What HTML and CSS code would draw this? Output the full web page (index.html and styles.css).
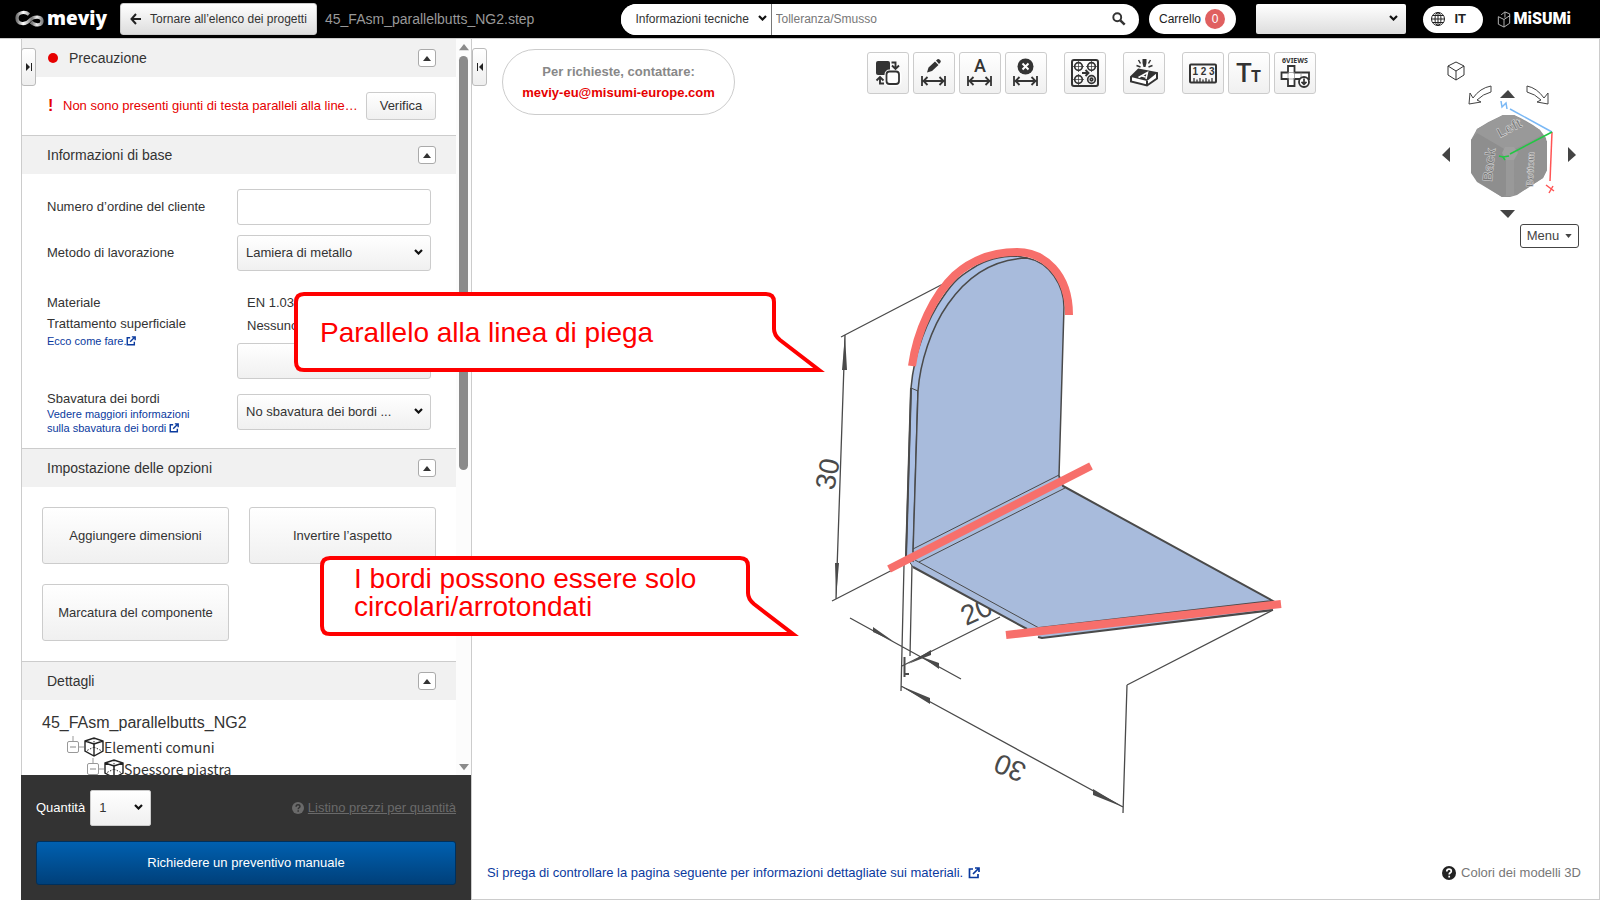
FILE: index.html
```html
<!DOCTYPE html>
<html lang="it">
<head>
<meta charset="utf-8">
<title>meviy</title>
<link rel="stylesheet" href="styles.css">
</head>
<body>
<svg class="defs" aria-hidden="true">
  <symbol id="ext" viewBox="0 0 12 12"><path d="M5 2H1.500v8.500H10V7M7 1h4v4M11 1L5 7" fill="none" stroke="currentColor" stroke-width="1.700"/></symbol>
  <symbol id="up" viewBox="0 0 8 5"><path d="M0 5L4 0l4 5z" fill="currentColor"/></symbol>
  <symbol id="chev" viewBox="0 0 9 6"><path d="M1 1l3.500 3.500L8 1" fill="none" stroke="#111" stroke-width="2.200"/></symbol>
  <symbol id="help" viewBox="0 0 14 14"><circle cx="7" cy="7" r="7" fill="currentColor"/><path d="M4.800 5.400c0-3 4.500-2.800 4.500-.2 0 1.600-2.100 1.500-2.100 3.200M7.200 9.700v1.700" fill="none" stroke="var(--mark)" stroke-width="1.700"/></symbol>
  <symbol id="box" viewBox="0 0 20 20"><path d="M1 4l9-3 9 3v10l-9 5-9-5zM1 4l9 3 9-3M10 7v12" fill="none" stroke="#222" stroke-width="1.400"/><path d="M10 1v9M10 10l-8 4M10 10l8 4" fill="none" stroke="#222" stroke-dasharray="1.500 1.500"/></symbol>
  <symbol id="dim" viewBox="0 0 42 42"><path d="M9 24v10M32 24v10M10.500 29h20M14.500 25l-4 4 4 4M26.500 25l4 4-4 4" fill="none" stroke="#333" stroke-width="1.800"/></symbol>
</svg>

<header class="topbar">
  <a class="brand" href="#" aria-label="meviy">
    <svg class="brand-mark" viewBox="0 0 29 16"><defs><linearGradient id="mg"><stop offset="0" stop-color="#777"/><stop offset=".25" stop-color="#fff"/><stop offset=".6" stop-color="#777"/><stop offset=".8" stop-color="#eee"/><stop offset="1" stop-color="#888"/></linearGradient></defs><path d="M14 3.500C10 0 2 1 2 7c0 7 9 7 13 2 4-4 12-4 12 1 0 5-7 5-11 1" fill="none" stroke="url(#mg)" stroke-width="3.200"/></svg>
    <span>meviy</span>
  </a>
  <button class="btn back"><svg class="i12" viewBox="0 0 12 12"><path d="M6 1L1.500 6 6 11M1.500 6H11" fill="none" stroke="#222" stroke-width="2"/></svg>Tornare all’elenco dei progetti</button>
  <span class="filename">45_FAsm_parallelbutts_NG2.step</span>
  <form class="search">
    <span class="pick"><select aria-label="Categoria"><option>Informazioni tecniche</option></select><svg><use href="#chev"/></svg></span>
    <input type="text" aria-label="Cerca" placeholder="Tolleranza/Smusso">
    <button type="button" class="find" aria-label="Cerca"><svg viewBox="0 0 16 16"><circle cx="6" cy="6" r="4.500" fill="none" stroke="#333" stroke-width="2.200"/><path d="M9.500 9.500l5 5" stroke="#333" stroke-width="2.800"/></svg></button>
  </form>
  <button class="cart">Carrello <span class="count">0</span></button>
  <span class="pick account"><select aria-label="Account"><option></option></select><svg><use href="#chev"/></svg></span>
  <button class="lang"><svg viewBox="0 0 14 14"><g fill="none" stroke="#222"><circle cx="7" cy="7" r="6.500"/><ellipse cx="7" cy="7" rx="3" ry="6.500"/><path d="M7 .5v13M.5 7h13M1.500 3.500h11M1.500 10.500h11"/></g></svg>IT</button>
  <a class="misumi" href="#"><svg viewBox="0 0 14 18"><path d="M1 6l6 3v8l-6-3zM7 9l6-4v8l-6 4M4 4l4-3v6M8 1l5 2v3" fill="none" stroke="#bbb"/></svg>MiSUMi</a>
</header>

<div class="work">
  <aside class="side">
    <button class="edge edge-left" aria-label="Chiudi pannello"><svg viewBox="0 0 8 10"><path d="M1 1l4 4-4 4z" fill="#222"/><path d="M6.500 1v8" stroke="#222"/></svg></button>
    <div class="panel">
      <div class="scroll">
        <section>
          <h2><i class="dot"></i>Precauzione<button class="fold" aria-label="Comprimi"><svg><use href="#up"/></svg></button></h2>
          <div class="alert"><b>!</b><span class="msg">Non sono presenti giunti di testa paralleli alla line…</span><button class="btn">Verifica</button></div>
        </section>
        <section>
          <h2>Informazioni di base<button class="fold" aria-label="Comprimi"><svg><use href="#up"/></svg></button></h2>
          <div class="fields">
            <label for="ord">Numero d’ordine del cliente</label><input id="ord" type="text">
            <label for="met">Metodo di lavorazione</label><span class="pick"><select id="met"><option>Lamiera di metallo</option></select><svg><use href="#chev"/></svg></span>
            <div class="mat-l"><span>Materiale</span><span>Trattamento superficiale</span><a href="#">Ecco come fare.<svg><use href="#ext"/></svg></a></div>
            <div class="mat-v"><span>EN 1.0330</span><span>Nessuno</span><button class="btn" aria-label="Modifica"></button></div>
            <div class="edge-l"><label for="sb">Sbavatura dei bordi</label><a href="#">Vedere maggiori informazioni<br>sulla sbavatura dei bordi <svg><use href="#ext"/></svg></a></div>
            <span class="pick"><select id="sb"><option>No sbavatura dei bordi ...</option></select><svg><use href="#chev"/></svg></span>
          </div>
        </section>
        <section>
          <h2>Impostazione delle opzioni<button class="fold" aria-label="Comprimi"><svg><use href="#up"/></svg></button></h2>
          <div class="options"><button class="btn">Aggiungere dimensioni</button><button class="btn">Invertire l’aspetto</button><button class="btn">Marcatura del componente</button></div>
        </section>
        <section>
          <h2>Dettagli<button class="fold" aria-label="Comprimi"><svg><use href="#up"/></svg></button></h2>
          <div class="tree">
            <div class="root">45_FAsm_parallelbutts_NG2</div>
            <div class="node"><svg class="knot" viewBox="0 0 17 22"><path d="M6 0v5M12 11h5" stroke="#999"/><rect x=".5" y="5.500" width="11" height="11" rx="1.500" fill="#fff" stroke="#999"/><path d="M3 11h6" stroke="#888"/></svg><svg class="cube"><use href="#box"/></svg>Elementi comuni</div>
            <div class="node sub"><svg class="knot" viewBox="0 0 17 22"><path d="M6 0v5M12 11h5" stroke="#999"/><rect x=".5" y="5.500" width="11" height="11" rx="1.500" fill="#fff" stroke="#999"/><path d="M3 11h6" stroke="#888"/></svg><svg class="cube"><use href="#box"/></svg>Spessore piastra</div>
          </div>
        </section>
      </div>
      <div class="bar"><svg><use href="#up"/></svg><div class="track"><div class="thumb"></div></div><svg class="down"><use href="#up"/></svg></div>
    </div>
    <div class="order">
      <div class="qty"><label for="q">Quantità</label><span class="pick"><select id="q"><option>1</option></select><svg><use href="#chev"/></svg></span><a href="#"><svg><use href="#help"/></svg><u>Listino prezzi per quantità</u></a></div>
      <button class="quote">Richiedere un preventivo manuale</button>
    </div>
  </aside>

  <main class="viewer">
    <button class="edge edge-right" aria-label="Apri pannello"><svg viewBox="0 0 8 10"><path d="M7 1L3 5l4 4z" fill="#222"/><path d="M1.500 1v8" stroke="#222"/></svg></button>
    <div class="contact"><span>Per richieste, contattare:</span><a href="#">meviy-eu@misumi-europe.com</a></div>
    <div class="tools">
      <div>
        <button class="tool" aria-label="Scambia"><svg viewBox="0 0 42 42"><rect x="9" y="9" width="14" height="14" rx="2" fill="#333"/><rect x="19.500" y="19.500" width="13" height="13" rx="3" fill="#fff" stroke="#fff" stroke-width="4"/><rect x="19.500" y="19.500" width="12.500" height="12.500" rx="3" fill="#fff" stroke="#333" stroke-width="1.800"/><path d="M24.500 10.500h4V17M25 13.500l3.500 3.500 3.500-3.500M17 31.500h-4V25M9.500 28.500L13 25l3.500 3.500" fill="none" stroke="#333" stroke-width="1.900"/></svg></button>
        <button class="tool" aria-label="Modifica quota"><svg viewBox="0 0 42 42"><use href="#dim"/><path d="M14 20.500l1.500-5 6.500-6 3.500 3.500-6.500 6zM23 8.500l1.500-1.300q1-.5 2 .4l1 1q.7 1-.1 1.900L26 12z" fill="#333"/></svg></button>
        <button class="tool" aria-label="Quota testo"><svg viewBox="0 0 42 42"><use href="#dim"/><text x="21" y="20" class="t-a">A</text></svg></button>
        <button class="tool" aria-label="Elimina quota"><svg viewBox="0 0 42 42"><use href="#dim"/><circle cx="20.500" cy="14.500" r="8" fill="#333"/><path d="M17.500 11.500l6 6m0-6l-6 6" stroke="#fff" stroke-width="2"/></svg></button>
      </div>
      <div>
        <button class="tool" aria-label="Fori"><svg viewBox="0 0 42 42" fill="none" stroke="#333"><rect x="8" y="8" width="26" height="26" rx="2" stroke-width="2"/><g stroke-width="1.700"><circle cx="14.500" cy="14.500" r="3.800"/><circle cx="27.500" cy="14.500" r="3.800"/><circle cx="14.500" cy="27.500" r="3.800"/><circle cx="27.500" cy="27.500" r="3.800"/><circle cx="27.500" cy="27.500" r="1.300"/></g><path d="M9 14.500h11M14.500 9v11M22 14.500h11M27.500 9v11M9 27.500h11M14.500 22v11" stroke-width=".7"/><path d="M18 21h6M21.500 18l3 3-3 3" stroke-width="1.900"/></svg></button>
      </div>
      <div>
        <button class="tool" aria-label="Marcatura"><svg viewBox="0 0 42 42"><path d="M8 25L15.500 17.500 34 21v5.500L24 33.500 8 29.500z" fill="#fff" stroke="#333" stroke-width="2"/><path d="M8 25L15.500 17.500 34 21 24 29z" fill="#333"/><path d="M24 29v4.500" stroke="#333" stroke-width="2"/><path d="M15.500 25.500l9-5-1.500 6.500M19 24l3.500 1" fill="none" stroke="#fff" stroke-width="1.500"/><path d="M19.500 7h4v4l-1 4h-2l-1-4z" fill="#333"/><path d="M15.500 8l2 3.500M13.500 13.500l4 1.500M27.500 8l-2 3.500M29.500 13.500l-4 1.500" stroke="#333" stroke-width="1.500"/></svg></button>
      </div>
      <div>
        <button class="tool" aria-label="Misura"><svg viewBox="0 0 42 42"><rect x="8" y="12.500" width="26" height="18" rx="1" fill="none" stroke="#333" stroke-width="2"/><text x="21.500" y="23" class="t-n">1 2 3</text><path d="M12 30v-4M15 30v-2.500M18 30v-4M21 30v-2.500M24 30v-4M27 30v-2.500M30 30v-4" stroke="#333" stroke-width="1.300"/></svg></button>
        <button class="tool" aria-label="Testo"><svg viewBox="0 0 42 42"><text x="16" y="30" class="t-t">T</text><text x="28" y="30" class="t-s">T</text></svg></button>
        <button class="tool" aria-label="6 viste"><svg viewBox="0 0 42 42"><text x="21" y="11" class="t-v">6VIEWS</text><path d="M7.500 20.500h6.500v-6.500h6.500v6.500H35v6.500H20.500v7H14v-7H7.500z" fill="#fff" stroke="#333" stroke-width="1.800"/><path d="M14 20.500h6.500v6.500H14zM27 20.500V27" fill="none" stroke="#888" stroke-width=".7"/><circle cx="30" cy="30" r="5" fill="#fff" stroke="#333" stroke-width="1.800"/><path d="M30 26.500v5.500M27.500 29.800L30 32.300l2.500-2.500" fill="none" stroke="#333" stroke-width="1.700"/></svg></button>
      </div>
    </div>

    <svg class="model" viewBox="800 230 500 600" role="img" aria-label="Modello 3D">
      <g class="dimension">
        <path d="M841 337L943 284M845 335L836 599M832 601L906 563M904 565L901 691M912 565L910 656M850 618L961 679M902 666L1000 617M901 686L1123 807M1127 685L1123 813M1127 685L1273 610"/>
        <path class="head" d="M845 335l-3 35h5zM836 598l-1-35h4zM893 641l-20-14v5zM922 657l17 6v6zM908 664l23-14v5zM901 686l29 12v6zM1123 807l-30-18v6z"/>
        <path d="M904.500 657V677M905 674h4" stroke-width="2"/>
        <text transform="translate(834 491) rotate(-79)">30</text>
        <text transform="translate(966 626) rotate(-24)">20</text>
        <text transform="translate(1028 765) rotate(203)">30</text>
      </g>
      <g class="plate">
        <path d="M1059 475L1063 486L1273 601L1273 610L1042 638L913 567L906 557L913 549z" stroke="none"/>
        <path class="side-face" d="M906 557L911 388C914 352 928 318 943 297C955 279 962 275 973 268C985 260 999 256 1017 256L1027 258L918 391L913 561z"/>
        <path d="M913 552L918 391C920 363 931 328 948 304C966 278 990 259 1027 258C1050 262 1064 286 1064 307L1059 476"/>
        <path d="M911 388l7 3M913 549L1059 475M919 562L1065 488M915 560L1039 628M913 567L906 557" fill="none" stroke-width="1"/>
        <path class="bold" d="M1059 476L1063 486L1273 601L1039 628M913 567L1027 629M1038 637L1042 638L1273 610M906 557L911 388"/>
      </g>
      <g class="mark"><path d="M912 366C917 330 934 295 955 275C973 259 994 252 1017 252C1030 252 1042 256 1053 268C1064 280 1069 297 1069 315"/><path d="M889 569L1091 466M1006 635L1281 604"/></g>
    </svg>

    <div class="orient">
      <svg viewBox="0 0 180 150">
        <path d="M28 16l8-4 8 4v9l-8 5-8-5zM28 16l8 5 8-5M36 21v9" fill="none" stroke="#333"/>
        <path d="M71 36q-11 2-18 12l-3-5-1 11 12-2-4-2q6-6 14-8zM107 36q10 2 17 12l4-5v11l-11-2 4-2q-6-6-14-8z" fill="#fff" stroke="#444"/>
        <path d="M83 65h11q14 6 26 15l6 8 1 8v24l-4 8-26 17-7 2H82l-25-15-6-9V90l6-11q12-8 26-14z" fill="#929292"/>
        <path d="M83 65h11l26 15 1 6-32 16h-3L54 87l3-8z" fill="#999"/>
        <path d="M51 90l6-7 29 17v44l-4 3-25-16-6-9z" fill="#8e8e8e"/>
        <path d="M93 103l27-17 7 5v29l-4 8-27 17z" fill="#929292"/>
        <path d="M85 97h9l4 6-4 7h-8l-4-7z" fill="#a0a0a0"/><path d="M86 110h8v36h-8z" fill="#999"/>
        <g class="faces"><text transform="translate(80 88) rotate(-27)">Left</text><text transform="translate(72 132) rotate(-84)">Back</text><text class="sm" transform="translate(113 137) rotate(-88)">Bottom</text></g>
        <path d="M90 59l42 23" stroke="#7ab8f5" stroke-width="1.500"/><path d="M132 82l-2 49" stroke="#f55" stroke-width="1.500"/><path d="M132 82l-42 22M79 106l4 1 6-1M83 107l2 3" fill="none" stroke="#22c744" stroke-width="1.500"/>
        <path d="M81 51l1 6 4-4 1 6" fill="none" stroke="#7ab8f5" stroke-width="1.500"/><path d="M126 135l8 6M133 136l-4 7" stroke="#f55" stroke-width="1.500"/>
        <path d="M80 48l8-8 7 8zM30 97v15l-8-7zM148 97v15l8-7z" fill="#444"/>
      </svg>
      <svg class="below" viewBox="0 0 180 9"><path d="M80 0h15l-7 8z" fill="#444"/></svg>
      <button class="menu">Menu <svg><use href="#up"/></svg></button>
    </div>

    <footer class="notes"><a href="#">Si prega di controllare la pagina seguente per informazioni dettagliate sui materiali. <svg><use href="#ext"/></svg></a><button><svg><use href="#help"/></svg>Colori dei modelli 3D</button></footer>
  </main>
</div>

<div class="callout first"><svg viewBox="0 0 532 80"><path d="M10 2H472Q480 2 480 10V37Q480 43 486 48L525 78H10Q2 78 2 70V10Q2 2 10 2z"/></svg><p>Parallelo alla linea di piega</p></div>
<div class="callout second"><svg viewBox="0 0 480 80"><path d="M10 2H420Q428 2 428 10V37Q428 43 434 48L473 78H10Q2 78 2 70V10Q2 2 10 2z"/></svg><p>I bordi possono essere solo<br>circolari/arrotondati</p></div>
</body>
</html>
```
FILE: styles.css
```css
* { box-sizing: border-box; }
body { margin: 0; height: 100vh; display: flex; flex-direction: column; position: relative; overflow: hidden; background: #fff; color: #333; font: 13px/16px "Liberation Sans", Arial, sans-serif; }
button, input, select { font: inherit; color: inherit; margin: 0; }
a { color: #0a3a9e; text-decoration: none; }
svg { display: block; flex: none; overflow: visible; }
.defs { position: absolute; width: 0; height: 0; }

.btn, .fields select, .fields input { border: 1px solid #ccc; border-radius: 3px; background: linear-gradient(#fff, #f0f0f0); }
.pick { position: relative; display: block; }
.pick select { appearance: none; display: block; width: 100%; height: 100%; }
.pick svg { position: absolute; right: 8px; top: calc(50% - 4px); width: 9px; height: 6px; pointer-events: none; }

/* top bar */
.topbar { height: 38px; flex: none; display: flex; align-items: center; background: #000; padding: 0 29px 0 15px; }
.brand { display: flex; align-items: center; gap: 3px; width: 105px; color: #fff; font: 800 19px/24px "Open Sans", sans-serif; }
.brand span { padding-bottom: 2px; }
.brand-mark { width: 29px; height: 16px; }
.i12 { width: 12px; height: 12px; }
.back { height: 32px; width: 197px; display: flex; align-items: center; justify-content: center; gap: 8px; padding: 0; white-space: nowrap; font-size: 12px; background: linear-gradient(#fff, #ddd); }
.filename { margin-left: 8px; font-size: 14px; color: #999; }
.search { margin-left: auto; width: 518px; height: 31px; display: flex; align-items: center; background: #fff; border-radius: 16px; overflow: hidden; }
.search .pick { width: 151px; height: 31px; }
.search select { border: 0; border-right: 1px solid #777; border-radius: 0; background: #fff; padding: 0 0 0 15px; font-size: 12px; }
.search .pick svg { right: 5px; }
.search input { flex: 1; min-width: 0; border: 0; outline: 0; height: 29px; padding: 0 4px; font-size: 12px; }
.search input::placeholder { color: #777; }
.find { border: 0; background: none; padding: 0 13px; }
.find svg { width: 14px; height: 14px; }
.cart { margin-left: 10px; width: 87px; height: 30px; border: 0; border-radius: 15px; background: #fff; padding: 0; display: flex; align-items: center; justify-content: center; gap: 4px; font-size: 12px; color: #222; }
.count { width: 20px; height: 20px; border-radius: 50%; background: #e06060; color: #fff; line-height: 20px; }
.account { margin-left: 20px; width: 150px; height: 30px; }
.account select { border: 0; border-radius: 2px; background: linear-gradient(#fff, #ddd); }
.lang { margin-left: 17px; width: 60px; height: 27px; border: 0; border-radius: 14px; background: #fff; display: flex; align-items: center; gap: 10px; padding: 0 8px; color: #222; font-weight: bold; }
.lang svg { width: 14px; height: 14px; }
.misumi { margin-left: 14px; display: flex; align-items: center; gap: 3px; color: #fff; font: 900 16px/20px Roboto, sans-serif; }
.misumi svg { width: 14px; height: 17px; }

/* left panel */
.work { flex: 1; min-height: 0; display: flex; padding-left: 21px; border-top: 1px solid #ccc; }
.side { width: 450px; flex: none; display: flex; flex-direction: column; position: relative; }
.panel { flex: 1; min-height: 0; display: flex; border-left: 1px solid #ccc; }
.scroll { flex: 1; min-width: 0; overflow: hidden; }
section + section { border-top: 1px solid #ccc; }
h2 { margin: 0; height: 38px; display: flex; align-items: center; background: #f1f1f1; padding: 0 20px 0 25px; font-size: 14px; font-weight: normal; }
.dot { width: 10px; height: 10px; border-radius: 50%; background: #e60000; margin: 0 11px 0 1px; }
.fold { margin-left: auto; width: 18px; height: 18px; border: 1px solid #aaa; border-radius: 3px; background: #fff; padding: 0; display: grid; place-items: center; }
.fold svg { width: 8px; height: 5px; }
.alert { height: 58px; display: flex; align-items: center; padding: 0 20px 0 25px; color: #e60000; }
.alert b { width: 16px; padding-left: 1px; font-size: 16px; }
.alert .msg { flex: 1; white-space: nowrap; }
.alert .btn { width: 70px; height: 28px; padding: 0; color: #333; }
.fields { display: grid; grid-template-columns: 190px 1fr; row-gap: 10px; align-items: center; padding: 15px 25px 18px; }
.fields input, .fields .pick { width: 100%; height: 36px; }
.fields input { background: #fff; }
.fields select { padding: 0 8px; }
.mat-l, .mat-v { align-self: start; display: flex; flex-direction: column; }
.mat-l { margin-top: 11px; line-height: 21px; }
.mat-v { margin-top: 10px; padding-bottom: 5px; line-height: 23px; }
.mat-v span { padding-left: 10px; }
.mat-l a, .edge-l a { font-size: 11px; line-height: 14px; }
.fields a svg { display: inline-block; width: 10px; height: 10px; vertical-align: -1px; }
.mat-v .btn { height: 36px; margin-top: 6px; }
.edge-l { display: flex; flex-direction: column; align-self: start; margin: -3px 0 -5px; }
.options { display: grid; grid-template-columns: 1fr 1fr; gap: 20px; padding: 20px; }
.options .btn { height: 57px; padding: 0; }
.tree { padding: 11px 20px 0; font: 14px/22px "Noto Sans CJK JP", "Noto Sans", sans-serif; }
.root { margin-bottom: 1px; font: 16px/24px "Liberation Sans", Arial, sans-serif; }
.node { display: flex; align-items: center; padding-left: 25px; white-space: nowrap; }
.sub { padding-left: 45px; }
.knot { width: 17px; height: 22px; }
.cube { width: 20px; height: 20px; }
.bar { width: 15px; flex: none; background: #fcfcfc; display: flex; flex-direction: column; align-items: center; padding: 4px 0; color: #8b8b8b; }
.bar svg { width: 10px; height: 8px; }
.bar .down { transform: rotate(180deg); }
.track { flex: 1; width: 9px; padding: 5px 0; }
.thumb { height: 59%; border-radius: 5px; background: #8b8b8b; }
.edge { position: absolute; z-index: 1; top: 9px; left: 0; width: 15px; height: 38px; padding: 0; border: 1px solid #bbb; border-radius: 3px; background: linear-gradient(#fff, #eee); display: grid; place-items: center; }
.edge svg { width: 8px; height: 10px; }
.order { background: #333; padding: 15px; color: #fff; }
.qty { display: flex; align-items: center; gap: 5px; height: 36px; margin-bottom: 15px; }
.qty .pick { width: 61px; height: 36px; }
.qty select { border: 1px solid #ccc; border-radius: 2px; background: linear-gradient(#fff, #f0f0f0); padding: 0 8px; color: #333; }
.qty a { margin-left: auto; display: flex; align-items: center; gap: 4px; color: #6a6a6a; --mark: #333; }
.qty a svg { width: 12px; height: 12px; }
.quote { width: 100%; height: 44px; border: 1px solid #00305c; border-radius: 3px; background: linear-gradient(#0060b0, #00407a); color: #fff; }

/* viewer */
.viewer { flex: 1; min-width: 0; position: relative; border: solid #ccc; border-width: 0 1px 1px; display: flex; flex-direction: column; }
.contact { position: absolute; left: 30px; top: 10px; width: 233px; height: 66px; border: 1px solid #ccc; border-radius: 33px; display: flex; flex-direction: column; align-items: center; justify-content: center; line-height: 21px; font-weight: bold; color: #888; }
.contact a { color: #e60000; }
.tools { position: absolute; left: 395px; top: 13px; display: flex; gap: 17px; }
.tools div { display: flex; gap: 4px; }
.tool { width: 42px; height: 42px; padding: 0; border: 1px solid #ccc; border-radius: 3px; background: linear-gradient(#fff, #f0f0f0); display: grid; place-items: center; }
.tool svg { width: 42px; height: 42px; margin: -1px; }
.tool text { fill: #333; text-anchor: middle; font-family: "Liberation Sans", sans-serif; }
.tool .t-a { font: 500 18px Roboto, sans-serif; }
.tool .t-n { font-size: 10px; font-weight: bold; }
.tool .t-t { font: 500 26px Roboto, sans-serif; }
.tool .t-s { font: bold 16px Roboto, sans-serif; }
.tool .t-v { font: bold 7px "Noto Sans", sans-serif; }
.model { position: absolute; left: 328px; top: 191px; width: 500px; height: 600px; }
.dimension { fill: none; stroke: #4a4a4a; stroke-width: 1.3; }
.dimension .head { fill: #4a4a4a; stroke: none; }
.dimension text { fill: #4a4a4a; stroke: none; font: 28px "Liberation Sans", sans-serif; }
.plate { fill: #a8bbdc; stroke: #4a4a4a; stroke-width: 1.5; }
.side-face { fill: #abc0e4; }
.bold { fill: none; stroke-width: 2; }
.mark { fill: none; stroke: #f76f6b; stroke-width: 8; }
.orient { position: absolute; right: -1px; top: 11px; width: 180px; display: flex; flex-direction: column; }
.orient > svg { width: 180px; height: 150px; }
.orient > .below { height: 9px; margin-top: 10px; }
.faces { fill: #777; stroke: #ddd; stroke-width: .5; font: bold 14px "Liberation Sans", sans-serif; }
.faces .sm { font-size: 10px; }
.menu { align-self: flex-end; margin: 5px 21px 0 0; width: 59px; height: 24px; border: 1px solid #444; border-radius: 3px; background: #fff; padding: 0; display: flex; align-items: center; justify-content: center; gap: 6px; color: #444; }
.menu svg { width: 7px; height: 4px; transform: rotate(180deg); }
.notes { margin-top: auto; display: flex; justify-content: space-between; align-items: center; padding: 0 18px 18px 15px; }
.notes a { display: flex; align-items: center; gap: 5px; }
.notes a svg { width: 12px; height: 12px; }
.notes button { border: 0; background: none; padding: 0; display: flex; align-items: center; gap: 5px; color: #777; }
.notes button svg { width: 14px; height: 14px; color: #222; --mark: #fff; }

/* annotations lying over the whole window */
.callout { position: absolute; z-index: 3; height: 80px; color: #f00; font-size: 28px; line-height: 28px; }
.callout svg { position: absolute; inset: 0; width: 100%; height: 100%; fill: #fff; stroke: #f00; stroke-width: 4; }
.callout p { position: relative; margin: 0; white-space: nowrap; }
.first { left: 294px; top: 292px; width: 532px; padding: 27px 26px; }
.second { left: 320px; top: 556px; width: 480px; padding: 9px 34px; }
```
